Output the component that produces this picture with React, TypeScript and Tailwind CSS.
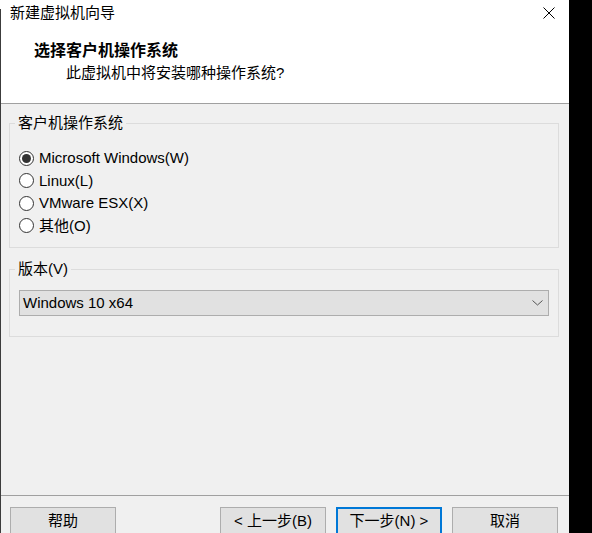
import React, { useState } from 'react';

const FONT = { fontFamily: '"Liberation Sans", "Noto Sans CJK SC", sans-serif' };

const osOptions = [
  { id: 'windows', label: 'Microsoft Windows(W)' },
  { id: 'linux', label: 'Linux(L)' },
  { id: 'esx', label: 'VMware ESX(X)' },
  { id: 'other', label: '其他(O)' },
];

const Radio: React.FC<{ checked: boolean; label: string; onClick: () => void }> = ({ checked, label, onClick }) => (
  <div className="flex items-center h-[22.5px] cursor-default" onClick={onClick}>
    <span className="w-[15px] h-[15px] rounded-full border border-[#333333] bg-white flex items-center justify-center">
      {checked && <span className="w-[9px] h-[9px] rounded-full bg-[#333333]" />}
    </span>
    <span className="ml-[5px] text-[15px] leading-[20px] text-black">{label}</span>
  </div>
);

const Button: React.FC<{ children: React.ReactNode; primary?: boolean }> = ({ children, primary }) => (
  <button
    className={
      primary
        ? 'w-[106px] h-[28px] bg-[#e1e1e1] border-2 border-[#0078d7] text-[15px] leading-[20px] text-black flex items-start justify-center pt-[2px]'
        : 'w-[106px] h-[28px] bg-[#e1e1e1] border border-[#adadad] text-[15px] leading-[20px] text-black flex items-start justify-center pt-[3px]'
    }
  >
    {children}
  </button>
);

export default function App() {
  const [os, setOs] = useState('windows');

  return (
    <div className="w-[592px] h-[533px] bg-black flex overflow-hidden" style={FONT}>
      <div className="w-[569px] h-full flex">
        {/* left window edge */}
        <div className="w-px h-full flex flex-col">
          <div className="h-[9px] bg-white" />
          <div className="flex-1 bg-[#3c3c3c]" />
        </div>

        <div className="w-[568px] h-full flex flex-col bg-[#f0f0f0]">
          {/* Header */}
          <div className="h-[103px] bg-white flex flex-col">
            <div className="h-[26px] flex items-center justify-between pl-[9px] pr-[14px]">
              <span className="text-[15px] leading-[26px] text-black">新建虚拟机向导</span>
              <svg width="12" height="12" viewBox="0 0 12 12" className="mt-[-1px]">
                <path d="M0.5 0.5 L11.5 11.5 M11.5 0.5 L0.5 11.5" stroke="#000" strokeWidth="1" />
              </svg>
            </div>
            <div className="mt-[14px] pl-[33px] text-[16px] leading-[22px] font-bold text-black">选择客户机操作系统</div>
            <div className="pl-[65px] text-[15px] leading-[21px] text-black">此虚拟机中将安装哪种操作系统?</div>
          </div>
          <div className="h-px bg-[#a0a0a0]" />

          {/* Body */}
          <div className="flex-1 flex flex-col">
            <fieldset className="mt-[9px] ml-[8px] w-[550px] h-[135px] border border-[#dcdcdc] px-[9px]">
              <legend className="ml-[-4px] px-[3px] text-[15px] leading-[20px] text-black">客户机操作系统</legend>
              <div className="pt-[14px] flex flex-col">
                {osOptions.map((o) => (
                  <Radio key={o.id} checked={os === o.id} label={o.label} onClick={() => setOs(o.id)} />
                ))}
              </div>
            </fieldset>

            <fieldset className="mt-[11px] ml-[8px] w-[550px] h-[78px] border border-[#dcdcdc] px-[9px]">
              <legend className="ml-[-4px] px-[3px] text-[15px] leading-[20px] text-black">版本(V)</legend>
              <div className="mt-[11px] w-[530px] h-[26px] bg-[#e1e1e1] border border-[#adadad] flex items-center justify-between pl-[3px] pr-[5px]">
                <span className="text-[15px] leading-[20px] text-black">Windows 10 x64</span>
                <svg width="11" height="6" viewBox="0 0 11 6">
                  <polyline points="0.5,0.5 5.5,5 10.5,0.5" fill="none" stroke="#555" strokeWidth="1" />
                </svg>
              </div>
            </fieldset>
          </div>

          {/* Footer */}
          <div className="h-px bg-[#a0a0a0]" />
          <div className="pt-[11px] h-[37px] pl-[9px] pr-[11px] flex justify-between items-start">
            <Button>帮助</Button>
            <div className="flex gap-[10px]">
              <Button>&lt; 上一步(B)</Button>
              <Button primary>下一步(N) &gt;</Button>
              <Button>取消</Button>
            </div>
          </div>
        </div>
      </div>
    </div>
  );
}
